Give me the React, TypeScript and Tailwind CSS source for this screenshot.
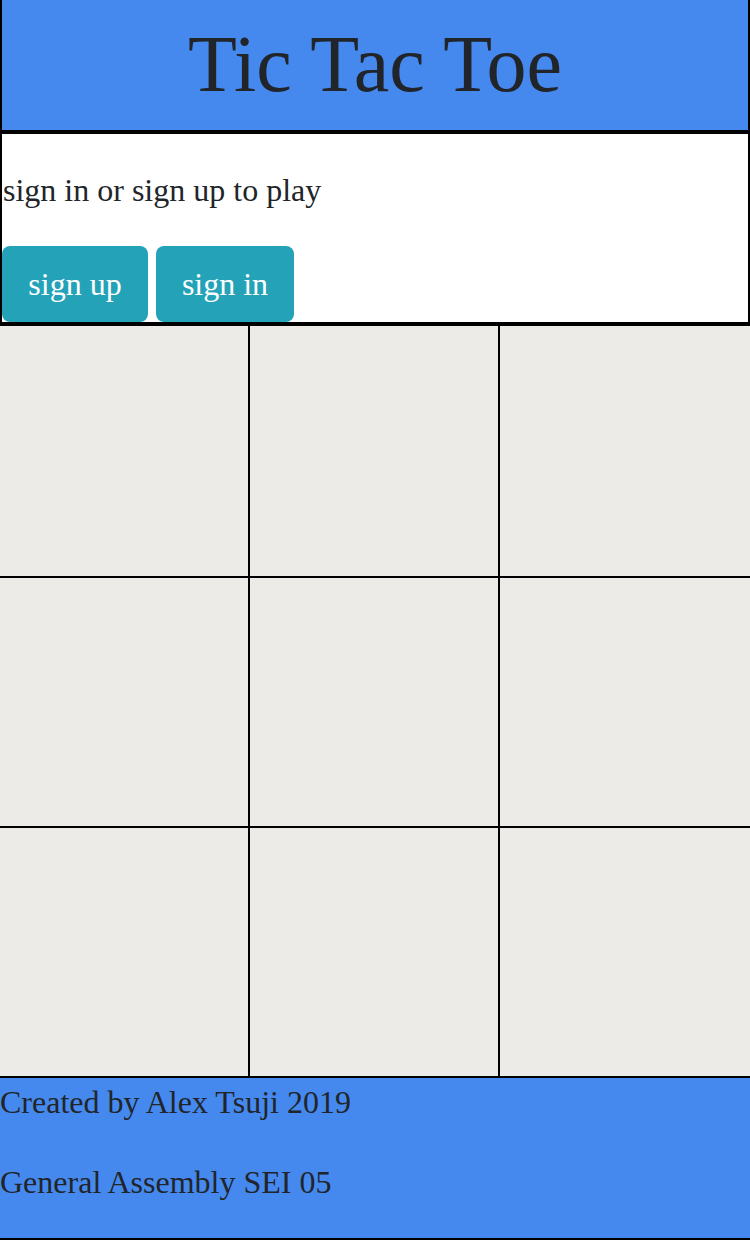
export default function App() {
  const cells = Array.from({ length: 9 }, (_, i) => i);

  return (
    <div className="w-[750px] bg-white font-['Liberation_Serif',serif] text-[#212529]">
      {/* header */}
      <header className="h-[132px] bg-[#4589ef] border-x-2 border-b-2 border-black flex items-center justify-center">
        <h1 className="text-[80px] leading-[96px] pb-[2px]">Tic Tac Toe</h1>
      </header>

      {/* auth panel */}
      <section className="border-2 border-black">
        <p className="mt-8 mb-8 text-[32px] leading-[48px] pl-[1px]">sign in or sign up to play</p>
        <div className="flex gap-2">
          <button className="h-[76px] w-[146px] rounded-[8px] bg-[#24a2b8] text-white text-[32px] leading-[48px]">
            sign up
          </button>
          <button className="h-[76px] w-[138px] rounded-[8px] bg-[#24a2b8] text-white text-[32px] leading-[48px]">
            sign in
          </button>
        </div>
      </section>

      {/* board */}
      <div className="border-t-2 border-black grid grid-cols-[248px_248px_250px] grid-rows-[250px_248px_248px] gap-[2px] bg-black">
        {cells.map((c) => (
          <div key={c} className="bg-[#ecebe7]" />
        ))}
      </div>

      {/* footer */}
      <footer className="bg-[#4589ef] border-y-2 border-black text-[32px] leading-[48px]">
        <p className="mb-8">Created by Alex Tsuji 2019</p>
        <p className="mb-8">General Assembly SEI 05</p>
      </footer>
    </div>
  );
}
